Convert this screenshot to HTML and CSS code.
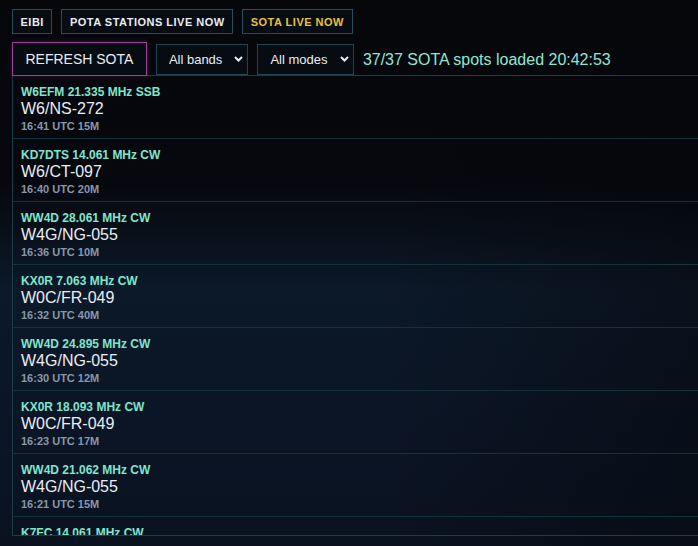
FILE: index.html
```html
<!DOCTYPE html>
<html lang="en">

<head>
    <meta charset="UTF-8">
    <meta name="viewport" content="width=device-width, initial-scale=1.0">
    <title>SOTA live now</title>
    <link rel="stylesheet" href="styles.css">
</head>

<body>
    <div class="page">

        <!-- Tabs -->
        <div class="tabs">
            <button class="tab">EIBI</button>
            <button class="tab">POTA STATIONS LIVE NOW</button>
            <button class="tab active">SOTA LIVE NOW</button>
        </div>

        <!-- Toolbar -->
        <div class="toolbar">
            <button class="refresh">REFRESH SOTA</button>
            <div class="picker">
                <select>
                    <option>All bands</option>
                </select>
                <svg width="9" height="6" viewBox="0 0 9 6">
                    <path d="M1 1l3.5 3.5L8 1" fill="none" stroke="#e8eef4" stroke-width="2" />
                </svg>
            </div>
            <div class="picker">
                <select>
                    <option>All modes</option>
                </select>
                <svg width="9" height="6" viewBox="0 0 9 6">
                    <path d="M1 1l3.5 3.5L8 1" fill="none" stroke="#e8eef4" stroke-width="2" />
                </svg>
            </div>
            <div class="status">37/37 SOTA spots loaded 20:42:53</div>
        </div>

        <!-- Spots -->
        <div class="spots">
            <div class="spot">
                <div class="who">W6EFM 21.335 MHz SSB</div>
                <div class="ref">W6/NS-272</div>
                <div class="when">16:41 UTC 15M</div>
            </div>
            <div class="spot">
                <div class="who">KD7DTS 14.061 MHz CW</div>
                <div class="ref">W6/CT-097</div>
                <div class="when">16:40 UTC 20M</div>
            </div>
            <div class="spot">
                <div class="who">WW4D 28.061 MHz CW</div>
                <div class="ref">W4G/NG-055</div>
                <div class="when">16:36 UTC 10M</div>
            </div>
            <div class="spot">
                <div class="who">KX0R 7.063 MHz CW</div>
                <div class="ref">W0C/FR-049</div>
                <div class="when">16:32 UTC 40M</div>
            </div>
            <div class="spot">
                <div class="who">WW4D 24.895 MHz CW</div>
                <div class="ref">W4G/NG-055</div>
                <div class="when">16:30 UTC 12M</div>
            </div>
            <div class="spot">
                <div class="who">KX0R 18.093 MHz CW</div>
                <div class="ref">W0C/FR-049</div>
                <div class="when">16:23 UTC 17M</div>
            </div>
            <div class="spot">
                <div class="who">WW4D 21.062 MHz CW</div>
                <div class="ref">W4G/NG-055</div>
                <div class="when">16:21 UTC 15M</div>
            </div>
            <div class="spot">
                <div class="who">K7FC 14.061 MHz CW</div>
            </div>
        </div>

    </div>
</body>

</html>
```

FILE: styles.css
```css
* {
    box-sizing: border-box;
    font-family: "Liberation Sans", Arial, sans-serif;
}

html,
body {
    height: 100%;
    margin: 0;
    overflow: hidden;
}

body {
    background-color: #05070b;
    background-image:
        linear-gradient(to right, rgba(4, 6, 10, 0) 55%, rgba(4, 6, 10, 0.45) 100%),
        linear-gradient(to bottom, #05070b 0, #06080e 185px, #0c1929 290px, #0b1525 420px, #0a1220 546px);
    color: #e8eef4;
}

.page {
    padding: 9px 0 0 12px;
}

/* Tabs */
.tabs {
    display: flex;
    gap: 9px;
}

.tab {
    height: 25px;
    padding: 0 7.5px;
    background-color: #070b12;
    border: 1px solid #21505c;
    color: #e8eef4;
    font-size: 11px;
    font-weight: bold;
    letter-spacing: 0.5px;
    cursor: pointer;
}

.tab.active {
    color: #e8c23a;
}

/* Toolbar */
.toolbar {
    display: flex;
    align-items: center;
    gap: 9px;
    margin-top: 8px;
}

.refresh {
    height: 34px;
    padding: 0 12.5px;
    background-color: #070b12;
    border: 1px solid #a2409c;
    box-shadow: 0 0 6px rgba(162, 64, 156, 0.25);
    color: #e8eef4;
    font-size: 14px;
    cursor: pointer;
}

.picker {
    display: flex;
    align-items: center;
    height: 31px;
    padding-right: 4px;
    background-color: #070b12;
    border: 1px solid #1e4651;
}

.picker select {
    appearance: none;
    -webkit-appearance: none;
    height: 100%;
    padding: 0 11.5px 0 12px;
    background: transparent;
    border: none;
    color: #e8eef4;
    font-size: 13px;
    outline: none;
}

.picker svg {
    display: block;
}

.status {
    color: #8fe6d2;
    font-size: 16px;
    margin-top: 1px;
}

/* Spots */
.spots {
    height: 461px;
    margin-top: -1px;
    margin-right: -30px;
    border: 1px solid #1b3e49;
    overflow: hidden;
}

.spot {
    height: 63px;
    padding: 10px 8px 0;
    border-bottom: 1px solid #14323c;
}

.who {
    color: #7fe5cd;
    font-size: 12px;
    font-weight: bold;
    line-height: 13px;
}

.ref {
    color: #e8eef4;
    font-size: 16px;
    line-height: 20px;
}

.when {
    margin-top: 1px;
    color: #8797ab;
    font-size: 11px;
    font-weight: bold;
    line-height: 13px;
}
```
